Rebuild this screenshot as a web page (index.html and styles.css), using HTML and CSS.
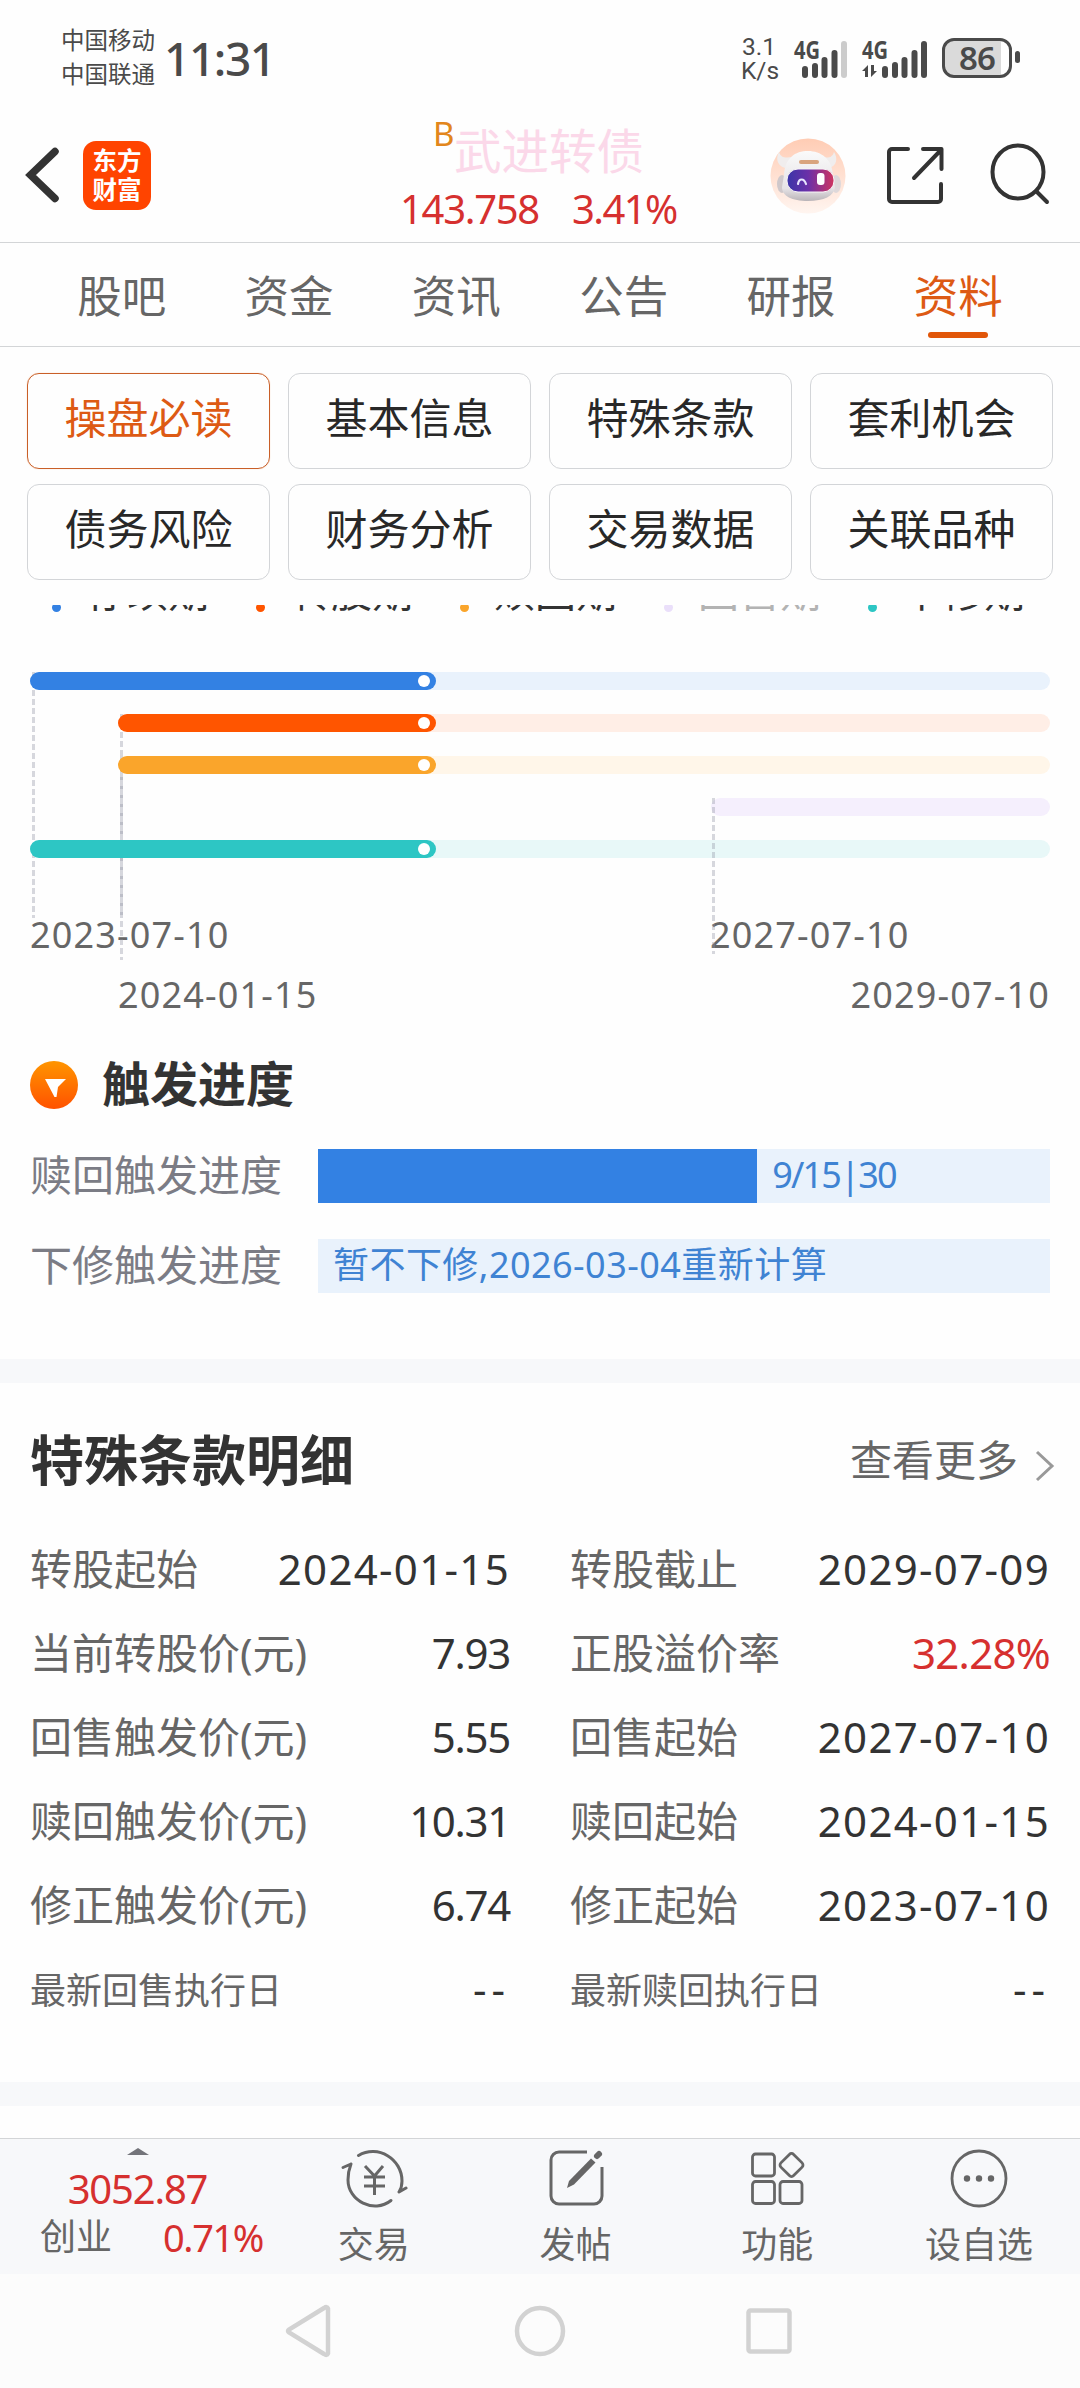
FILE: index.html
```html
<!DOCTYPE html>
<html lang="zh-CN">
<head>
    <meta charset="UTF-8">
    <meta name="viewport" content="width=device-width, initial-scale=1.0">
    <title>武进转债 - 资料</title>
    <link rel="stylesheet" href="styles.css">
</head>
<body>

    <!-- Status bar -->
    <div class="status-bar">
        <div class="carriers">
            <span>中国移动</span>
            <span>中国联通</span>
        </div>
        <div class="clock">11:31</div>
        <div class="net-speed">
            <span>3.1</span>
            <span>K/s</span>
        </div>
        <svg class="signal" width="56" height="40" viewBox="0 0 56 40">
            <text x="0" y="19" class="signal-text" textLength="26" lengthAdjust="spacingAndGlyphs">4G</text>
            <g class="signal-bars">
                <path d="M11 29v6M21 26v9M30.500 20v15M40.500 13v22"/>
                <path class="off" d="M50 4v31"/>
            </g>
        </svg>
        <svg class="signal" width="68" height="40" viewBox="0 0 68 40">
            <text x="0" y="19" class="signal-text" textLength="26" lengthAdjust="spacingAndGlyphs">4G</text>
            <path d="M0 31l6-6v12h-3v-6zM15 31l-6 6V25h3v6z" fill="#4a4a4a"/>
            <g class="signal-bars">
                <path d="M23 29v6M33 25v10M42.500 20v15M52.500 13v22M62 4v31"/>
            </g>
        </svg>
        <div class="battery"><span>86</span></div>
        <div class="battery-cap"></div>
    </div>

    <!-- Header -->
    <header class="main-header">
        <svg class="back" width="36" height="60" viewBox="0 0 36 60">
            <path d="M31 6.500L6.500 30L31 53.500" fill="none" stroke="#333" stroke-width="7.500" stroke-linecap="round"/>
        </svg>
        <div class="logo">
            <span>东方</span>
            <span>财富</span>
        </div>
        <div class="quote">
            <div class="quote-name"><sup>B</sup><h1>武进转债</h1></div>
            <div class="quote-price"><span class="price">143.758</span><span class="rate">3.41%</span></div>
        </div>
        <svg class="avatar" width="76" height="76" viewBox="0 0 76 76">
            <defs>
                <linearGradient id="avatarBg" x1="0" y1="0" x2="0" y2="1">
                    <stop offset="0" stop-color="#ffccb4"/>
                    <stop offset="1" stop-color="#fff5f0"/>
                </linearGradient>
                <linearGradient id="avatarHead" x1="0" y1="0" x2="0" y2="1">
                    <stop offset="0" stop-color="#fafafa"/>
                    <stop offset="0.750" stop-color="#e6e3e6"/>
                    <stop offset="1" stop-color="#b9b4b8"/>
                </linearGradient>
                <linearGradient id="avatarVisor" x1="0" y1="0" x2="1" y2="0">
                    <stop offset="0" stop-color="#3a35a8"/>
                    <stop offset="0.450" stop-color="#6b30a8"/>
                    <stop offset="1" stop-color="#cf3560"/>
                </linearGradient>
            </defs>
            <circle cx="38" cy="38" r="37.500" fill="url(#avatarBg)"/>
            <path d="M15 30C6 27 6 19 9 14c2 6 6 6 14 5zM59 30c8-2 9-10 5-16c-2 6-5 6-13 5z" fill="#f0eded"/>
            <ellipse cx="12" cy="46" rx="5" ry="9" fill="#cfc8cb"/>
            <ellipse cx="66" cy="46" rx="5" ry="9" fill="#ded8da"/>
            <path d="M14 37C15 20 25 13 38 13s24 8 25 24l2 12c-1 9-11 14-27 14S12 58 12 49z" fill="url(#avatarHead)"/>
            <rect x="29" y="22" width="20" height="4" rx="2" fill="#d9a47e"/>
            <rect x="17" y="31" width="47" height="23" rx="11" fill="url(#avatarVisor)" stroke="#f7f3f7" stroke-width="1"/>
            <path d="M28 46c1-6 6-6 8 0" fill="none" stroke="#e8e6ff" stroke-width="2.200" stroke-linecap="round"/>
            <rect x="47" y="35" width="7.500" height="12" rx="3" fill="#fff"/>
        </svg>
        <svg class="share" width="60" height="60" viewBox="0 0 60 60" fill="none" stroke="#333" stroke-width="4" stroke-linecap="round" stroke-linejoin="round">
            <path d="M22 4H6a3 3 0 0 0-3 3V54a3 3 0 0 0 3 3H52a3 3 0 0 0 3-3V39"/>
            <path d="M37 4H55.500V24M54 6L28 33"/>
        </svg>
        <svg class="search" width="62" height="62" viewBox="0 0 62 62" fill="none" stroke="#333" stroke-width="4" stroke-linecap="round">
            <ellipse cx="29" cy="29" rx="25.500" ry="26.500"/>
            <path d="M47.500 48.500L58 59"/>
        </svg>
    </header>

    <!-- Tabs -->
    <nav class="tabs">
        <a>股吧</a>
        <a>资金</a>
        <a>资讯</a>
        <a>公告</a>
        <a>研报</a>
        <a class="active">资料</a>
    </nav>

    <div class="pills">
        <a class="active">操盘必读</a>
        <a>基本信息</a>
        <a>特殊条款</a>
        <a>套利机会</a>
        <a>债务风险</a>
        <a>财务分析</a>
        <a>交易数据</a>
        <a>关联品种</a>
    </div>

    <!-- Timeline and trigger progress -->
    <section class="progress-panel">
        <div class="legend">
            <span class="blue">存续期</span>
            <span class="orange">转股期</span>
            <span class="yellow">赎回期</span>
            <span class="purple muted">回售期</span>
            <span class="teal">下修期</span>
        </div>

        <div class="timeline">
            <div class="track blue"><div class="fill"></div></div>
            <div class="track orange late"><div class="fill"></div></div>
            <div class="track yellow late"><div class="fill"></div></div>
            <div class="track purple last"></div>
            <div class="track teal"><div class="fill"></div></div>
            <i class="guide guide-start"></i>
            <i class="guide guide-convert"></i>
            <i class="guide guide-redeem"></i>
            <i class="guide guide-resale"></i>
        </div>
        <div class="dates">
            <span>2023-07-10</span>
            <span>2027-07-10</span>
        </div>
        <div class="dates dates-late">
            <span>2024-01-15</span>
            <span>2029-07-10</span>
        </div>

        <div class="sub-title">
            <svg width="48" height="48" viewBox="0 0 48 48">
                <defs>
                    <linearGradient id="iconBg" x1="0" y1="0" x2="0" y2="1">
                        <stop offset="0" stop-color="#ff9500"/>
                        <stop offset="1" stop-color="#ff5200"/>
                    </linearGradient>
                </defs>
                <circle cx="24" cy="24" r="24" fill="url(#iconBg)"/>
                <path d="M15 18H36L28 26L26.500 36H24.500Z" fill="#fff"/>
            </svg>
            <h3>触发进度</h3>
        </div>

        <div class="trigger">
            <label>赎回触发进度</label>
            <div class="bar"><div class="bar-fill" style="width: 60%"></div><span class="count">9/15|30</span></div>
        </div>
        <div class="trigger">
            <label>下修触发进度</label>
            <div class="bar"><span>暂不下修,2026-03-04重新计算</span></div>
        </div>
    </section>

    <div class="divider"></div>

    <!-- Special terms -->
    <section class="terms">
        <div class="terms-head">
            <h2>特殊条款明细</h2>
            <a>查看更多
                <svg width="20" height="32" viewBox="0 0 20 32"><path d="M2 2L17 16L2 30" fill="none" stroke="#999" stroke-width="3"/></svg>
            </a>
        </div>
        <div class="terms-grid">
            <div><span>转股起始</span><b class="date">2024-01-15</b></div>
            <div><span>转股截止</span><b class="date">2029-07-09</b></div>
            <div><span>当前转股价(元)</span><b>7.93</b></div>
            <div><span>正股溢价率</span><b class="red">32.28%</b></div>
            <div><span>回售触发价(元)</span><b>5.55</b></div>
            <div><span>回售起始</span><b class="date">2027-07-10</b></div>
            <div><span>赎回触发价(元)</span><b>10.31</b></div>
            <div><span>赎回起始</span><b class="date">2024-01-15</b></div>
            <div><span>修正触发价(元)</span><b>6.74</b></div>
            <div><span>修正起始</span><b class="date">2023-07-10</b></div>
            <div class="small"><span>最新回售执行日</span><b class="dash">--</b></div>
            <div class="small"><span>最新赎回执行日</span><b class="dash">--</b></div>
        </div>
    </section>

    <div class="divider"></div>

    <!-- Bottom toolbar -->
    <footer class="toolbar">
        <div class="index">
            <i class="arrow-up"></i>
            <div class="index-value">3052.87</div>
            <div class="index-row"><span>创业</span><b>0.71%</b></div>
        </div>
        <a>
            <svg width="68" height="62" viewBox="0 0 68 62" fill="none" stroke="#666" stroke-width="3" stroke-linecap="round">
                <path d="M18.500 8.500C38 -3 62 12 62 34C62 39 61 42 59 45M59 45L66 41"/>
                <path d="M51 53.500C34 67 8 54 8 33C8 27 9 22 11 17M3 20.500L11 17"/>
                <path d="M25 19L34.500 29L43 19M24 30H45M24 39H45M34.500 29V48" stroke-linecap="butt"/>
            </svg>
            <span>交易</span>
        </a>
        <a>
            <svg width="62" height="62" viewBox="0 0 62 62" fill="none" stroke="#666" stroke-width="3">
                <path d="M42 5H14a8 8 0 0 0-8 8V49a8 8 0 0 0 8 8H49a8 8 0 0 0 8-8V20"/>
                <path d="M54 7L52 9" stroke-width="6" stroke-linecap="round"/>
                <path d="M22 41L24 34L46 11.500L50.500 15.500L29 37.500Z" fill="#666" stroke="none"/>
            </svg>
            <span>发帖</span>
        </a>
        <a>
            <svg width="62" height="62" viewBox="0 0 62 62" fill="none" stroke="#666" stroke-width="2.800">
                <rect x="6.500" y="7" width="22" height="22" rx="3"/>
                <rect x="6.500" y="34.500" width="22" height="22" rx="3"/>
                <rect x="34" y="34.500" width="22" height="22" rx="3"/>
                <rect x="36.500" y="9" width="18" height="18" rx="3" transform="rotate(45 45.500 18)"/>
            </svg>
            <span>功能</span>
        </a>
        <a>
            <svg width="62" height="62" viewBox="0 0 62 62">
                <ellipse cx="31" cy="31.500" rx="27" ry="27.500" fill="none" stroke="#666" stroke-width="2.800"/>
                <circle cx="19" cy="31.500" r="3.200" fill="#666"/>
                <circle cx="31" cy="31.500" r="3.200" fill="#666"/>
                <circle cx="43" cy="31.500" r="3.200" fill="#666"/>
            </svg>
            <span>设自选</span>
        </a>
    </footer>

    <!-- System navigation -->
    <div class="system-nav">
        <svg width="50" height="54" viewBox="0 0 50 54"><path d="M44 4.500V49.500Q43 52 40 50L5 28.500Q3 27 5 25.500L40 4Q43 2 44 4.500Z" fill="none" stroke="#d2d2d2" stroke-width="4.500"/></svg>
        <svg width="54" height="54" viewBox="0 0 54 54"><circle cx="27" cy="27" r="23" fill="none" stroke="#d2d2d2" stroke-width="4.500"/></svg>
        <svg width="50" height="54" viewBox="0 0 50 54"><rect x="2.500" y="6.500" width="41" height="41" rx="2" fill="none" stroke="#d2d2d2" stroke-width="4.500"/></svg>
    </div>

</body>
</html>
```

FILE: styles.css
```css
* {
    box-sizing: border-box;
}
body {
    width: 1080px;
    height: 2388px;
    margin: 0;
    overflow: hidden;
    display: flex;
    flex-direction: column;
    font-family: "Noto Sans", "Noto Sans CJK SC", sans-serif;
    background-color: #fefefe;
    color: #333;
}
h1, h2, h3 {
    margin: 0;
}
b {
    font-weight: 400;
}
svg {
    display: block;
    flex: none;
}

/* Status bar */
.status-bar {
    height: 110px;
    padding-left: 61px;
    display: flex;
    align-items: flex-start;
    color: #4a4a4a;
}
.carriers {
    width: 103px;
    padding-top: 23px;
    font-size: 23.5px;
    line-height: 34px;
    white-space: nowrap;
}
.carriers span,
.net-speed span {
    display: block;
}
.clock {
    width: 577px;
    padding-top: 28px;
    font-size: 46px;
    line-height: 60px;
    letter-spacing: -1.4px;
    font-weight: 500;
}
.net-speed {
    width: 36px;
    margin-right: 17px;
    padding-top: 35px;
    font-family: Roboto, sans-serif;
    font-size: 24.5px;
    line-height: 24px;
    text-align: center;
}
.signal {
    margin-top: 40px;
    margin-right: 12px;
    overflow: visible;
}
.signal-text {
    font-size: 25px;
    font-weight: 700;
    fill: #4a4a4a;
}
.signal-bars {
    stroke: #4a4a4a;
    stroke-width: 6;
    stroke-linecap: round;
}
.signal-bars .off {
    stroke: #ccc;
}
.battery {
    width: 70px;
    height: 40px;
    margin-top: 38px;
    border: 3px solid #4a4a4a;
    border-radius: 12px;
    background: linear-gradient(to right, #dadada 56px, #fefefe 56px);
    font-size: 33px;
    line-height: 34px;
    letter-spacing: -1px;
    font-weight: 600;
    text-align: center;
}
.battery-cap {
    width: 5px;
    height: 12px;
    margin: 51px 0 0 3px;
    border-radius: 3px;
    background-color: #4a4a4a;
}

/* Header */
.main-header {
    height: 133px;
    display: flex;
    align-items: flex-start;
    border-bottom: 1px solid #d3d5d7;
}
.back {
    margin: 35px 0 0 24px;
}
.logo {
    width: 68px;
    height: 69px;
    margin: 31px 0 0 23px;
    padding-top: 5px;
    border-radius: 13px;
    background-color: #ff4400;
    color: #fff;
    font-size: 24.5px;
    line-height: 29px;
    font-weight: 700;
    text-align: center;
}
.logo span {
    display: block;
}
.quote {
    width: 378px;
    margin-left: 249px;
}
.quote-name {
    height: 76px;
    padding-left: 33px;
    display: flex;
}
.quote-name sup {
    width: 21px;
    padding-top: 9px;
    font-size: 33px;
    line-height: 30px;
    color: #e2861c;
}
.quote-name h1 {
    padding-top: 10px;
    font-size: 47.5px;
    line-height: 62px;
    font-weight: 400;
    color: #fbd8e9;
}
.quote-price {
    display: flex;
    font-size: 40px;
    line-height: 46px;
    color: #d6302f;
}
.price {
    width: 172px;
    letter-spacing: -1.3px;
}
.rate {
    letter-spacing: -1.6px;
}
.avatar {
    margin: 28px 0 0 -8px;
}
.share {
    margin: 35px 0 0 40px;
}
.search {
    margin: 33px 0 0 43px;
}

/* Tabs */
.tabs {
    height: 104px;
    padding: 0 38px;
    display: flex;
    border-bottom: 1px solid #d3d5d7;
    font-size: 44.5px;
    line-height: 105px;
    color: #666;
}
.tabs a {
    flex: 1;
    text-align: center;
}
.tabs .active {
    position: relative;
    color: #dd5a14;
}
.tabs .active::after {
    content: "";
    position: absolute;
    left: 53px;
    bottom: 8px;
    width: 60px;
    height: 6px;
    border-radius: 3px;
    background-color: #e15609;
}

.pills {
    height: 258px;
    padding: 26px 27px 25px;
    display: grid;
    grid-template-columns: repeat(4, 1fr);
    gap: 15px 18px;
}
.pills a {
    border: 1.5px solid #d3d5d8;
    border-radius: 12px;
    font-size: 42px;
    line-height: 88px;
    text-align: center;
    color: #282828;
}
.pills .active {
    border-color: #c95f28;
    box-shadow: 0 0 1px #f2b98f;
    color: #dd5a14;
}

/* Timeline */
.progress-panel {
    height: 754px;
    padding: 0 30px;
    overflow: hidden;
}
.legend {
    height: 42px;
    margin-top: -35px;
    padding-left: 22px;
    display: flex;
    font-size: 41px;
    line-height: 42px;
}
.legend span {
    flex: none;
    width: 204px;
    display: flex;
    white-space: nowrap;
}
.legend span::before {
    content: "";
    width: 9px;
    height: 9px;
    margin: 33px 25px 0 0;
    border-radius: 50%;
    background-color: var(--c);
}
.legend .muted {
    color: #b3b3b3;
}
.blue {
    --c: #3381e3;
    --light: #e9f2fc;
}
.orange {
    --c: #ff5500;
    --light: #ffeee6;
}
.yellow {
    --c: #faa52b;
    --light: #fff6e9;
}
.purple {
    --c: #eadffa;
    --light: #f5effd;
}
.teal {
    --c: #2dc6c4;
    --light: #e8f8f8;
}
.timeline {
    position: relative;
    margin-top: 60px;
    display: flex;
    flex-direction: column;
    gap: 24px;
}
.track {
    height: 18px;
    border-radius: 9px;
    background-color: var(--light);
}
.track.late {
    margin-left: 88px;
}
.track.last {
    margin-left: 681px;
}
.fill {
    position: relative;
    z-index: 1;
    width: 406px;
    height: 18px;
    padding: 3px 6px;
    border-radius: 9px;
    background-color: var(--c);
}
.late .fill {
    width: 318px;
}
.fill::after {
    content: "";
    display: block;
    width: 12px;
    height: 12px;
    margin-left: auto;
    border-radius: 50%;
    background-color: #fff;
}
/* dashed markers dropping from the start of each period */
.guide {
    position: absolute;
    width: 3px;
    background: repeating-linear-gradient(to bottom, rgba(140, 143, 160, 0.35) 0 6px, transparent 6px 9px);
}
.guide-start {
    left: 2px;
    top: 0;
    height: 246px;
}
.guide-convert {
    left: 90px;
    top: 42px;
    height: 246px;
}
.guide-redeem {
    left: 90px;
    top: 84px;
    height: 159px;
}
.guide-resale {
    left: 682px;
    top: 126px;
    height: 156px;
}
.dates {
    display: flex;
    font-size: 36px;
    line-height: 60px;
    letter-spacing: 1.15px;
    color: #666;
}
.timeline + .dates {
    margin-top: 47px;
}
.dates span:first-child {
    width: 680px;
}
.dates-late {
    padding-left: 88px;
    justify-content: space-between;
}
.dates-late span:first-child {
    width: auto;
}

/* Trigger progress */
.sub-title {
    height: 48px;
    margin: 36px 0 40px;
    display: flex;
}
.sub-title h3 {
    margin-left: 24px;
    font-size: 48px;
    line-height: 45px;
}
.trigger {
    height: 54px;
    margin-bottom: 36px;
    display: flex;
}
.trigger label {
    width: 288px;
    font-size: 42px;
    line-height: 51px;
    color: #7b7c85;
}
.bar {
    flex: 1;
    display: flex;
    background-color: #e9f2fc;
    font-size: 36px;
    line-height: 52px;
    letter-spacing: 0.45px;
    color: #3f83d3;
}
.bar-fill {
    background-color: #3381e3;
}
.bar span {
    margin-left: 15px;
}
.bar .count {
    letter-spacing: -1.8px;
}
.divider {
    height: 24px;
    background-color: #f7f8fa;
}

/* Special terms */
.terms {
    height: 699px;
    padding: 0 30px;
}
.terms-head {
    height: 144px;
    padding-top: 10px;
    display: flex;
    justify-content: space-between;
    align-items: center;
}
.terms-head h2 {
    font-size: 54px;
    line-height: 60px;
}
.terms-head a {
    display: flex;
    font-size: 42px;
    line-height: 60px;
    color: #666;
}
.terms-head svg {
    margin: 20px -5px 0 17px;
}
.terms-grid {
    display: grid;
    grid-template-columns: 480px 480px;
    justify-content: space-between;
}
.terms-grid div {
    height: 84px;
    display: flex;
    justify-content: space-between;
    font-size: 42px;
    line-height: 84px;
}
.terms-grid span {
    color: #666;
}
.terms-grid b {
    letter-spacing: -1.3px;
}
.terms-grid .date {
    letter-spacing: 1.3px;
}
.terms-grid .small span {
    font-size: 36px;
    line-height: 87px;
}
.terms-grid .dash {
    letter-spacing: 5px;
}
.terms-grid .red {
    letter-spacing: -0.7px;
    color: #d6302f;
}

/* Bottom toolbar */
.toolbar {
    height: 136px;
    margin-top: 32px;
    display: flex;
    border-top: 1px solid #d3d5d7;
    background-color: #f7f8fa;
    font-size: 36px;
    color: #666;
}
.toolbar a {
    flex: 1;
    display: flex;
    flex-direction: column;
    align-items: center;
    padding-top: 8px;
    line-height: 72px;
}
.index {
    width: 273px;
    padding-top: 9px;
}
.arrow-up {
    display: block;
    width: 22px;
    height: 7px;
    margin-left: 127px;
    background-color: #73747a;
    clip-path: polygon(50% 0, 100% 100%, 0 100%);
}
.index-value {
    margin-top: 10px;
    padding-left: 2px;
    font-size: 40px;
    line-height: 48px;
    letter-spacing: -1.2px;
    text-align: center;
    color: #d6302f;
}
.index-row {
    padding: 0 10px 0 40px;
    display: flex;
    justify-content: space-between;
    line-height: 48px;
}
.index-row b {
    font-size: 38px;
    letter-spacing: -1.4px;
    color: #d6302f;
}

.system-nav {
    height: 114px;
    display: flex;
    justify-content: center;
    gap: 179px;
    padding-top: 30px;
    background-color: #fcfcfc;
}
```
